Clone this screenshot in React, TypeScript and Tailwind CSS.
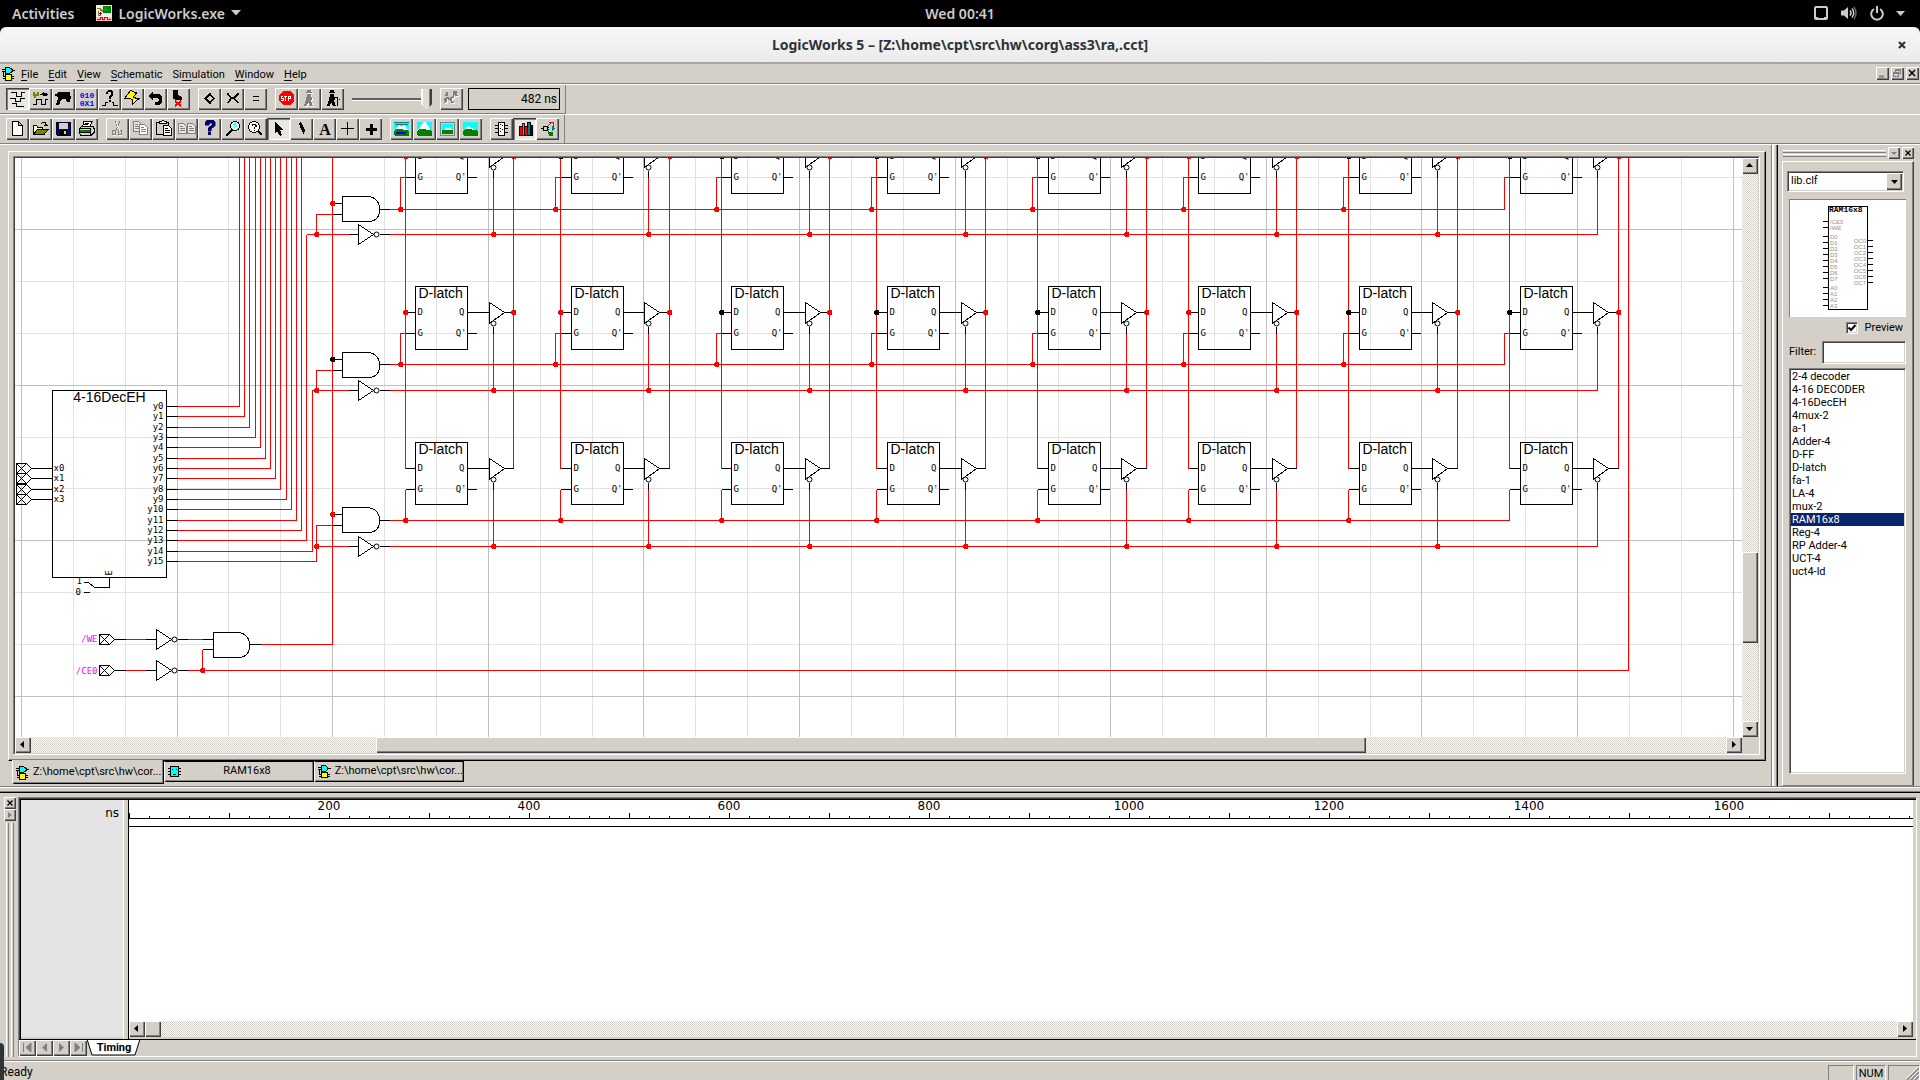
import React, { useState } from "react";

const RAISED = "bg-[#d4d0c8] shadow-[inset_1px_1px_0_#fff,inset_-1px_-1px_0_#404040,inset_-2px_-2px_0_#808080]";
const PRESSED = "bg-[#e9e7e3] shadow-[inset_1px_1px_0_#404040,inset_2px_2px_0_#808080,inset_-1px_-1px_0_#fff]";
const SUNKEN = "border border-l-[#808080] border-t-[#808080] border-r-white border-b-white shadow-[inset_1px_1px_0_#404040,inset_-1px_-1px_0_#d4d0c8]";
const DITHER = "bg-[conic-gradient(#fff_25%,#d4d0c8_0_50%,#fff_0_75%,#d4d0c8_0)] bg-[length:2px_2px]";

/* ---------- toolbar icons ---------- */

const P = ({ d, s = "#000", f = "none", w = 1 }: { d: string; s?: string; f?: string; w?: number }) => (
  <path d={d} stroke={s} fill={f} strokeWidth={w} />
);

function Icon({ children, size = 18 }: { children: React.ReactNode; size?: number }) {
  return (
    <svg width={size} height={size} viewBox="1 1 18 18" shapeRendering="crispEdges" className="overflow-visible" aria-hidden="true">
      {children}
    </svg>
  );
}

const page = (x: number, y: number, c: string, f = "#fff") => (
  <>
    <path d={`M${x}.5 ${y}.5h5l3 3v7h-8z`} stroke={c} fill={f} />
    <path d={`M${x + 2} ${y + 3}.5h3M${x + 2} ${y + 5}.5h5M${x + 2} ${y + 7}.5h5`} stroke={c} />
  </>
);

const walker = (c: string) => (
  <>
    <rect x="7" y="1" width="4" height="3" fill={c} />
    <rect x="6" y="3" width="6" height="1" fill={c} />
    <path d="M7 5h4l1 5-1 2 2 5h-3l-2-4-1 4H4l2-6z" fill={c} />
  </>
);

const landscape = (mountain: string, extra?: React.ReactNode) => (
  <>
    <rect x="2" y="3" width="15" height="9" fill="#0ff" />
    <path d={mountain} fill="#fff" />
    <path d="M2 12l2-2h5l3 1h3l2 2v3l-1 1H3l-1-1z" fill="#008000" />
    {extra}
  </>
);

const icons: Record<string, React.ReactNode> = {
  wave: <P d="M3 3.500h5.500v4H13v-4h4M2 9.500h5.500v3H12v-3h5M4 14.500h4.500v3H16" />,
  probe: (
    <>
      <P d="M2 15.500h3V10.500h5v5h4v-5h3" />
      <path d="M2 3h2v2h2V3h2v4H5v2H3V7H2z" fill="#808000" />
      <P d="M9 5.500h3M15 5.500h2" />
      <path d="M11 5l2-3v2h3v3h-3v1z" fill="#000" />
    </>
  ),
  gun: <path d="M1 5h2l1-2h12v3h-1l2 2-1 5h-3l-1-3H9l-2 1-2 5H2l2-7-1-2H1z" fill="#000" />,
  binary: (
    <g fill="#00f" stroke="none" fontSize="8" fontWeight="bold" className="font-['Liberation_Mono']">
      <text x="10" y="9" textAnchor="middle">010</text>
      <text x="10" y="17" textAnchor="middle">0X1</text>
    </g>
  ),
  query: (
    <>
      <path d="M6 5V3l2-2h3l2 2v3l-2 2v2H9V7l2-2V3H8v2zM9 11h2v2H9z" fill="#000" />
      <P d="M2 16.500h3.500v-3H8M12 13.500h1.500v3h4" />
    </>
  ),
  bolt: <path d="M7.500 1.500L1.500 9.500h6l1.500 1v5l7.500-6.500h-4l-2-1 3-4z" fill="#ff0" stroke="#000" />,
  undo: <path d="M2 7l5-5v3h6l3 3v5l-3 3H9v-3h3l1-2-1-2H7v3z" fill="#000" />,
  boot: (
    <>
      <path d="M4 1h5v5l4 2v3H8l-4-1z" fill="#000" />
      <P d="M6 12l6 5M12 12l-6 5" s="#f00" w={2} />
    </>
  ),
  diamond: <path d="M10 5L14 9.500 10 14 5.500 9.500z" stroke="#000" fill="none" strokeWidth="1.500" />,
  cross: <P d="M4.500 4.500l3.500 4h3.500l4-4M4.500 14.500l3.500-5h3.500l4 5" w={1.500} />,
  equals: <P d="M7 7.500h6M7 11.500h6" />,
  stop: (
    <>
      <path d="M6 2h7l4 4v6l-4 4H6l-4-4V6z" fill="#f00" />
      <P d="M6 7.500H4.500v2H6v2H4M7 7.500h3M8.500 7v5M11.500 7v5M11.500 7.500h2v2h-2" s="#fff" />
    </>
  ),
  stepGray: (
    <>
      <g transform="translate(1 1)">{walker("#fff")}</g>
      {walker("#808080")}
    </>
  ),
  walk: (
    <>
      {walker("#000")}
      <P d="M12 8.500h2.500v8M16 10.500h1" />
    </>
  ),
  runGray: (
    <>
      <P d="M3 12l3-2 3 1 4-3M9 11l3 4M6 10l-2 5M14 5l2 3" s="#fff" w={2} />
      <P d="M2 11l3-2 3 1 4-3M8 10l3 4M5 9l-2 5M13 4l2 3M3 6h3M4 4h2" s="#808080" w={2} />
      <rect x="11" y="2" width="4" height="4" fill="#808080" />
    </>
  ),
  fileNew: <path d="M4.500 2.500h6l4 4v9.500h-10z M10.500 2.500v4h4" fill="#fff" stroke="#000" />,
  fileOpen: (
    <>
      <path d="M2.500 15.500v-9h3l1 1.500h5v2.500" fill="#ffffb0" stroke="#000" />
      <path d="M2.500 15.500l4-5.500h11l-4.500 5.500z" fill="#808000" stroke="#000" />
      <P d="M10 4.500l2-1h2l1.500 3M13 6.500h4" />
    </>
  ),
  save: (
    <>
      <path d="M2.500 3.500h13.500v13h-12.500l-1-1z" fill="#000080" stroke="#000" />
      <rect x="5" y="4" width="9" height="6" fill="#d4d0c8" />
      <rect x="5" y="11" width="8" height="5" fill="#000" />
      <rect x="10" y="12" width="2" height="3" fill="#d4d0c8" />
    </>
  ),
  print: (
    <>
      <path d="M5.500 7.500l1.500-5h8l-2 5z" fill="#fff" stroke="#000" />
      <path d="M2.500 9.500l2-2h12l.5 2v4l-3 3h-10l-1.500-2z" fill="#d4d0c8" stroke="#000" />
      <path d="M3 11h10v2H3z" fill="#008000" />
      <P d="M3 9.500h10M3 13.500h10M8 4.500h4M7 5.500h4M13.500 9v7" />
    </>
  ),
  cut: (
    <>
      <P d="M7 2l4 9M12 2l-4 9" s="#808080" />
      <P d="M4.500 11.500h3v4h-3zM10.500 11.500h3v4h-3z" s="#808080" />
      <P d="M8 3l4 9M5 16.500h3M11 16.500h3" s="#fff" />
    </>
  ),
  copy: (
    <>
      {page(2, 2, "#808080", "#e8e6e2")}
      {page(8, 5, "#808080", "#fff")}
    </>
  ),
  paste: (
    <>
      <path d="M2.500 3.500h12v12h-12z" fill="#d4d0c8" stroke="#000" />
      <path d="M5.500 4.500v-2h2l1-1h1l1 1h2v2z" fill="#fff" stroke="#000" />
      {page(9, 6, "#000")}
    </>
  ),
  dup: (
    <>
      {page(1, 4, "#808080", "#e8e6e2")}
      {page(10, 4, "#808080", "#e8e6e2")}
    </>
  ),
  help: (
    <>
      <path d="M5 6V3l2-2h6l2 2v4l-4 3v2H8V9l4-3V4H9v2z" fill="#000080" stroke="#000" strokeWidth=".5" />
      <rect x="8" y="13" width="3" height="3" fill="#000080" />
    </>
  ),
  zoomIn: (
    <>
      <circle cx="12" cy="7" r="4.500" fill="#c0ffff" stroke="#000" />
      <P d="M10 6l3-2M11 9l3-3" s="#0ff" />
      <P d="M9 11l-6 6" w={2} />
    </>
  ),
  zoomQ: (
    <>
      <circle cx="8" cy="8" r="5.500" fill="#fff" stroke="#000" />
      <P d="M6 6.500l1-1h2l1 1v1l-2 1v1M8 11h1" />
      <P d="M12 12l4 4" w={2} />
    </>
  ),
  arrow: <path d="M6 3l9 8h-4l2 5-2 1-3-5-2 2z" fill="#000" />,
  pen: <path d="M7 4l2-1 4 8-1 5-3-6z" fill="#000" />,
  textA: (
    <text x="10" y="16" textAnchor="middle" fontSize="16" fontWeight="bold" className="font-['Liberation_Serif']">
      A
    </text>
  ),
  thin: <P d="M9.500 3v13M3 9.500h13" />,
  thick: <P d="M10.500 5v11M5 10.500h11" w={3} />,
  land1: landscape(
    "M3 10l4-4 2 2 3-3 4 6z",
    <>
      <P d="M2 3.500h15M3 5.500h13" s="#008080" />
      <ellipse cx="9" cy="14" rx="5" ry="1.500" fill="#00f" />
    </>,
  ),
  land2: landscape("M2 12l3-4 3-5h3l3 5 2 4z"),
  land3: (
    <>
      <rect x="2" y="3" width="15" height="14" fill="#808080" />
      <rect x="3" y="4" width="13" height="12" fill="#d4d0c8" />
      <rect x="4" y="5" width="11" height="6" fill="#0ff" />
      <path d="M5 11l3-3 2 1 2-1 2 3z" fill="#fff" />
      <rect x="4" y="11" width="11" height="4" fill="#008000" />
    </>
  ),
  land4: landscape("M3 10l4-3 4 2 3 2z"),
  chip: (
    <>
      <path d="M6.500 3.500h6v13h-6z" fill="#fff" stroke="#000" />
      <P d="M3 6.500h3M3 9.500h3M3 13.500h3M13 6.500h3M13 9.500h3M13 13.500h3M8 5.500h1M8 9.500h1M8 12.500h1M10 6.500h1M10 10.500h1" />
    </>
  ),
  books: (
    <>
      <rect x="4.500" y="7.500" width="3" height="9" fill="#f00" stroke="#000" />
      <rect x="7.500" y="4.500" width="2" height="12" fill="#ff8000" stroke="#800000" />
      <rect x="9.500" y="7.500" width="3" height="9" fill="#f00" stroke="#000" />
      <rect x="12.500" y="3.500" width="3" height="13" fill="#008080" stroke="#000" />
      <rect x="15.500" y="6.500" width="2" height="10" fill="#0000c0" stroke="#000" />
    </>
  ),
  net: (
    <>
      <P d="M3 9.500h2M6 7.500h3v4H5.500v-4zM9 8.500h2M9 10.500h2" />
      <P d="M10 7l3-3M11 3.500h4v4" s="#f00" />
      <path d="M14 7l3 2-3 3z" fill="#008080" />
      <path d="M10 12l2 1 3 0v4h-4z" fill="#008000" />
    </>
  ),
};

function ToolButton({ name, label, pressed = false }: { name: string; label: string; pressed?: boolean }) {
  return (
    <button
      type="button"
      aria-label={label}
      aria-pressed={pressed}
      className={`flex h-[22px] w-[23px] items-center justify-center ${pressed ? PRESSED : RAISED}`}
    >
      <Icon>{icons[name]}</Icon>
    </button>
  );
}

function ToolGroup({ items }: { items: [string, string, boolean?][] }) {
  return (
    <div className="flex">
      {items.map(([n, l, p]) => (
        <ToolButton key={n} name={n} label={l} pressed={p} />
      ))}
    </div>
  );
}

function GateIcon() {
  return (
    <svg width="13" height="14" viewBox="0 0 13 14" shapeRendering="crispEdges" aria-hidden="true">
      <path d="M0 2.500h4M0 4.500h4M10 3.500h3M1.500 5v5M1 9.500h3M1 11.500h3M9 9.500h3M9 11.500h3" stroke="#000" />
      <path d="M3.500.5h4l2.500 2v2l-2.500 2h-4z" fill="#0ff" stroke="#000" />
      <path d="M3.500 7.500h6v5.500h-6z" fill="#ff0" stroke="#000" />
    </svg>
  );
}

function ChipIcon() {
  return (
    <svg width="13" height="12" viewBox="0 0 13 12" shapeRendering="crispEdges" aria-hidden="true">
      <path d="M0 2.500h13M0 5.500h13M0 8.500h13" stroke="#000" />
      <rect x="2.500" y=".5" width="8" height="10" fill="#0ff" stroke="#000" />
      <path d="M4 3.500h1M8 3.500h1M5 8.500h3" stroke="#000" />
    </svg>
  );
}

/* ---------- top of the window ---------- */

function TopBar() {
  return (
    <header className="grid h-[27px] shrink-0 grid-cols-[1fr_auto_1fr] items-center bg-black pb-px font-['Noto_Sans',sans-serif] text-[14px] font-semibold text-[#ccc]">
      <div className="flex items-center">
        <button type="button" className="pl-3">Activities</button>
        <button type="button" className="flex items-center pl-[22px]">
          <svg width="16" height="16" viewBox="0 0 16 16" shapeRendering="crispEdges" className="mr-[6px]" aria-hidden="true">
            <rect width="16" height="16" fill="#eee" />
            <rect x="7" y="1" width="8" height="7" fill="#008000" />
            <rect x="8" y="2" width="4" height="4" fill="#00a000" />
            <path d="M1 3h3v3M2 6v4h3M5 4l2 3" stroke="#808000" fill="none" />
            <path d="M3 8h3M4 7v3" stroke="#800080" />
            <rect y="12" width="16" height="4" fill="#ffc0c0" />
            <path d="M1 14.500h3v-2h2v2h2v-2h3v2h4" stroke="#f00" fill="none" />
          </svg>
          LogicWorks.exe
          <svg width="10" height="6" viewBox="0 0 10 6" className="ml-[6px]" aria-hidden="true"><path d="M0 0h10L5 5.500z" fill="#ccc" /></svg>
        </button>
      </div>
      <time>Wed 00:41</time>
      <div className="flex items-center justify-end pr-[15px]">
        <svg width="14" height="14" viewBox="0 0 14 14" aria-hidden="true"><rect x="1" y="1" width="12" height="12" rx="1" fill="none" stroke="#ccc" strokeWidth="2" /><path d="M2 11h2v1h-2zM10 11h2v1h-2z" fill="#ccc" /></svg>
        <svg width="16" height="14" viewBox="0 0 16 14" className="ml-[13px]" aria-hidden="true">
          <path d="M0 4.500h3L7 1v12L3 9.500H0z" fill="#ccc" />
          <path d="M9 4.500q2 2.500 0 5M11 2.500q3.500 4.500 0 9" stroke="#ccc" strokeWidth="1.500" fill="none" />
          <path d="M13 1q4 6 0 12" stroke="#666" strokeWidth="1.500" fill="none" />
        </svg>
        <svg width="14" height="15" viewBox="0 0 14 15" className="ml-[13px]" aria-hidden="true">
          <path d="M4 3a5.800 5.800 0 1 0 6 0M7 0v7" stroke="#ccc" strokeWidth="2" fill="none" />
        </svg>
        <svg width="9" height="5" viewBox="0 0 9 5" className="ml-3" aria-hidden="true"><path d="M0 0h9L4.500 5z" fill="#ccc" /></svg>
      </div>
    </header>
  );
}

function TitleBar() {
  return (
    <div className="bg-black">
      <div className="grid h-[37px] grid-cols-[1fr_auto_1fr] items-center rounded-t-md border-b-2 border-[#a6a6a6] bg-gradient-to-b from-[#f7f7f7] to-[#ebebeb] font-['Noto_Sans',sans-serif]">
        <span />
        <h1 className="text-[14px] font-bold text-[#2e3436]">LogicWorks 5 – [Z:\home\cpt\src\hw\corg\ass3\ra,.cct]</h1>
        <button type="button" aria-label="Close" className="mr-[14px] justify-self-end">
          <svg width="8" height="8" viewBox="0 0 8 8" aria-hidden="true"><path d="M1 1l6 6M7 1l-6 6" stroke="#2e3436" strokeWidth="2.200" /></svg>
        </button>
      </div>
    </div>
  );
}

const menus: [string, string, string][] = [
  ["", "F", "ile"], ["", "E", "dit"], ["", "V", "iew"], ["", "S", "chematic"], ["Si", "m", "ulation"], ["", "W", "indow"], ["", "H", "elp"],
];

function MenuBar() {
  return (
    <nav className="flex h-5 items-center border-b border-[#808080] pl-[2px] text-[11px]">
      <GateIcon />
      <div className="flex gap-[10px] pt-[3px] pl-[6px]">
        {menus.map(([a, u, b]) => (
          <button type="button" key={u}>
            {a}
            <span className="underline underline-offset-2">{u}</span>
            {b}
          </button>
        ))}
      </div>
      <div className="ml-auto flex gap-[2px] pr-px">
        <button type="button" aria-label="Minimize" className={`size-[13px] ${RAISED}`}>
          <svg width="13" height="13" aria-hidden="true"><path d="M3 9.500h5" stroke="#808080" strokeWidth="2" /></svg>
        </button>
        <button type="button" aria-label="Restore" className={`size-[13px] ${RAISED}`}>
          <svg width="13" height="13" shapeRendering="crispEdges" aria-hidden="true"><path d="M4.500 5V2.500h5v4H8M4 3.500h6M2.500 5.500h5v4h-5zM2 6.500h6" stroke="#808080" fill="none" /></svg>
        </button>
        <button type="button" aria-label="Close document" className={`size-[13px] ${RAISED}`}>
          <svg width="13" height="13" aria-hidden="true"><path d="M3 3l6 6M9 3l-6 6" stroke="#000" strokeWidth="1.500" /></svg>
        </button>
      </div>
    </nav>
  );
}

function Toolbars() {
  return (
    <div className="border-b border-[#808080]">
      <div className="border-t border-white">
        <div className="flex w-fit items-center gap-2 border-r border-b border-[#808080] py-[3px] pr-[5px] pl-[6px]">
          <ToolGroup
            items={[
              ["wave", "Timing window", true], ["probe", "Probe"], ["gun", "Trigger"], ["binary", "Show values"],
              ["query", "Signal query"], ["bolt", "Reset"], ["undo", "Clear unknowns"], ["boot", "Kick"],
            ]}
          />
          <ToolGroup items={[["diamond", "Expand"], ["cross", "Compress"], ["equals", "Normal scale"]]} />
          <div className="flex items-center gap-2">
            <ToolGroup items={[["stop", "Stop"], ["stepGray", "Step"], ["walk", "Walk"]]} />
            <div className="grid w-20 items-center">
              <input
                type="range"
                aria-label="Simulation speed"
                defaultValue={100}
                className="h-[22px] w-full appearance-none bg-transparent [&::-webkit-slider-runnable-track]:h-[3px] [&::-webkit-slider-runnable-track]:border-t-2 [&::-webkit-slider-runnable-track]:border-b [&::-webkit-slider-runnable-track]:border-t-[#606060] [&::-webkit-slider-runnable-track]:border-b-white [&::-webkit-slider-thumb]:-mt-[11px] [&::-webkit-slider-thumb]:h-[21px] [&::-webkit-slider-thumb]:w-[11px] [&::-webkit-slider-thumb]:appearance-none [&::-webkit-slider-thumb]:bg-[linear-gradient(90deg,#fff_2px,#e0ddd6_2px_8px,#808080_8px_9px,#404040_9px)] [&::-webkit-slider-thumb]:[clip-path:polygon(0_0,100%_0,100%_75%,50%_100%,0_75%)]"
              />
            </div>
            <ToolButton name="runGray" label="Run" />
          </div>
          <output className="-ml-[3px] flex h-[22px] w-[92px] items-center justify-end border border-black pr-[2px] text-[12px]">482 ns</output>
        </div>
      </div>
      <div className="border-t border-white">
        <div className="flex w-fit gap-2 border-r border-[#808080] py-[3px] pr-[5px] pl-[6px]">
          <ToolGroup items={[["fileNew", "New"], ["fileOpen", "Open"], ["save", "Save"], ["print", "Print"]]} />
          <ToolGroup
            items={[
              ["cut", "Cut"], ["copy", "Copy"], ["paste", "Paste"], ["dup", "Duplicate"], ["help", "Help"], ["zoomIn", "Magnify"],
              ["zoomQ", "Find"], ["arrow", "Point", true], ["pen", "Zap"], ["textA", "Text"], ["thin", "Draw signal"], ["thick", "Draw bus"],
            ]}
          />
          <ToolGroup items={[["land1", "Zoom out"], ["land2", "Zoom in"], ["land3", "Fit to window"], ["land4", "Normal size"]]} />
          <ToolGroup items={[["chip", "New device"], ["books", "Parts palette", true], ["net", "Connections"]]} />
        </div>
      </div>
    </div>
  );
}

/* ---------- scroll bars ---------- */

const arrows: Record<string, string> = {
  up: "M4 9h7L7.500 5z",
  down: "M4 6h7L7.500 10z",
  left: "M9 4v7L5 7.500z",
  right: "M6 4v7l4-3.500z",
};

function ScrollButton({ dir }: { dir: string }) {
  return (
    <button type="button" aria-label={`Scroll ${dir}`} className={`size-4 shrink-0 ${RAISED}`}>
      <svg width="16" height="16" aria-hidden="true"><path d={arrows[dir]} fill="#000" /></svg>
    </button>
  );
}

/* ---------- schematic ---------- */

const RED = "#f00";
const latches = [
  { x: 415, din: 405, gate: 400, tri: 489, en: 493, black: false },
  { x: 571, din: 560, gate: 555, tri: 644, en: 648, black: false },
  { x: 731, din: 721, gate: 716, tri: 805, en: 809, black: true },
  { x: 887, din: 876, gate: 871, tri: 961, en: 965, black: true },
  { x: 1048, din: 1037, gate: 1032, tri: 1121, en: 1126, black: true },
  { x: 1198, din: 1188, gate: 1183, tri: 1272, en: 1276, black: false },
  { x: 1359, din: 1348, gate: 1343, tri: 1432, en: 1437, black: true },
  { x: 1520, din: 1509, gate: 1504, tri: 1593, en: 1597, black: true },
];
const rows = [
  { d: 156, g: 177, top: 130, bottom: 193, bus: 209, low: 234, gate: 196, last: false },
  { d: 312, g: 333, top: 286, bottom: 349, bus: 364, low: 390, gate: 352, last: false },
  { d: 468, g: 489, top: 442, bottom: 504, bus: 520, low: 546, gate: 507, last: true },
];

const Dot = ({ x, y, c = RED }: { x: number; y: number; c?: string }) => (
  <path d={`M${x - 1.5} ${y - 2.5}h3l1 1v3l-1 1h-3l-1-1v-3z`} fill={c} />
);

const Tri = ({ x, y }: { x: number; y: number }) => (
  <>
    <path d={`M${x} ${y - 10}v20l15 -10z`} stroke="#000" fill="#fff" />
    <circle cx={x + 18} cy={y} r="2.500" stroke="#000" fill="#fff" shapeRendering="auto" />
  </>
);

const AndGate = ({ x, y, w }: { x: number; y: number; w: number }) => (
  <path d={`M${x} ${y}h${w - 12}q12 1 12 13q0 12 -12 12h${12 - w}z`} stroke="#000" fill="#fff" />
);

const Port = ({ x, y, tip = 5 }: { x: number; y: number; tip?: number }) => (
  <path
    d={`M${x} ${y - 5}h10l${tip} 5l${-tip} 5h-10zM${x} ${y - 5}l10 10M${x + 10} ${y - 5}l-10 10`}
    stroke="#000"
    fill="none"
  />
);

function Latch({ l, r, i }: { l: (typeof latches)[number]; r: (typeof rows)[number]; i: number }) {
  const { x, din, tri, en } = l;
  const gx = r.last ? din : l.gate;
  const end = i === latches.length - 1;
  return (
    <g>
      <path d={`M${din} ${r.g}H${gx}V${r.bus}M${en} ${r.g}V${r.low}`} stroke={RED} fill="none" />
      <path d={`M${din} ${r.d}H${x}M${din} ${r.g}H${x}M${x + 52} ${r.d}H${tri}M${x + 52} ${r.g}h9M${tri + 15} ${r.d}H${x + 98}M${en} ${r.d + 14}v7`} stroke="#000" />
      <rect x={x} y={r.top} width="52" height={r.bottom - r.top} fill="none" stroke="#000" />
      <path d={`M${tri} ${r.d - 10}v21l15 -11z`} stroke="#000" fill="none" />
      <circle cx={en} cy={r.d + 11} r="2.500" stroke="#000" fill="#fff" shapeRendering="auto" />
      {!end && <Dot x={gx} y={r.bus} />}
      {!end && <Dot x={en} y={r.low} />}
      {!r.last && <Dot x={din} y={r.d} c={l.black || (r.d < 200 && i === 1) ? "#000" : RED} />}
      {!r.last && <Dot x={x + 98} y={r.d} />}
      {r.top > 158 && (
        <text x={x + 3} y={r.top + 11} className="font-['Liberation_Sans',sans-serif] text-[14px]">D-latch</text>
      )}
      <g className="font-['DejaVu_Sans_Mono',monospace] text-[9px]">
        <text x={x + 2} y={r.d + 2}>D</text>
        <text x={x + 49} y={r.d + 2} textAnchor="end">Q</text>
        <text x={x + 2} y={r.g + 2}>G</text>
        <text x={x + 51} y={r.g + 2} textAnchor="end">Q'</text>
      </g>
    </g>
  );
}

function Schematic() {
  const lines = Array.from({ length: 40 }, (_, k) => k);
  return (
    <svg className="block h-full w-full bg-white" shapeRendering="crispEdges" role="img" aria-label="RAM circuit schematic">
      <g transform="translate(-14.5 -157.5)">
        {[false, true].map((major) => (
          <g key={String(major)} stroke={major ? "#c0c0c0" : "#e2e2e2"}>
            {lines.filter((k) => (k % 3 === 0) === major).map((k) => (
              <path key={k} d={`M${Math.round(21 + 51.870 * k)} 0V2000`} />
            ))}
            {lines.filter((k) => (k % 3 === 1) === major).map((k) => (
              <path key={k} d={`M0 ${Math.round(177 + 51.900 * k)}H3000`} />
            ))}
          </g>
        ))}

        <g stroke={RED} fill="none">
          {Array.from({ length: 16 }, (_, k) => {
            const x = k === 15 ? 316 : Math.round(239 + 5.187 * k);
            const y = Math.round(406 + 10.340 * k);
            const end = k === 15 ? 525 : k === 14 ? 390 : k === 13 ? 234 : 100;
            return <path key={k} d={`M177 ${y}H${x}V${end}`} />;
          })}
          <path d="M260 644H332V100M187 670H1628V100M125 639h20M125 670h20M187 639h15M202 670V649" />
          <path d="M306 234H348M311 390H348M316 546H348" />
          {rows.map((r) => (
            <path key={r.d} d={`M389 ${r.bus}H${r.last ? 1509 : 1504}M389 ${r.low}H1597M332 ${r.gate + 18}H316V${r.low}`} />
          ))}
          {latches.map(({ x, din }) => (
            <path key={x} d={`M${din} 100V468M${x + 98} 100V468`} />
          ))}
        </g>

        {rows.map((r, i) => (
          <g key={r.d}>
            <path d={`M332 ${r.gate + 7}H342M332 ${r.gate + 18}H342M379 ${r.bus}h10M348 ${r.low}h10M379 ${r.low}h10`} stroke="#000" />
            <AndGate x={342} y={r.gate} w={37} />
            <Tri x={358} y={r.low} />
            <Dot x={332} y={r.gate + 7} c={i === 1 ? "#000" : RED} />
            <Dot x={316} y={r.low} />
            {latches.map((l, c) => (
              <Latch key={l.x} l={l} r={r} i={c} />
            ))}
          </g>
        ))}

        <path d="M52 390H166V577H52z" stroke="#000" fill="none" />
        <text x="109" y="401" textAnchor="middle" className="font-['Liberation_Sans',sans-serif] text-[14px]">4-16DecEH</text>
        <g className="font-['DejaVu_Sans_Mono',monospace] text-[9px]">
          {Array.from({ length: 16 }, (_, k) => {
            const y = Math.round(406 + 10.340 * k);
            return (
              <g key={k}>
                <path d={`M166 ${y}h11`} stroke="#000" />
                <text x="163" y={y + 2} textAnchor="end">{`y${k}`}</text>
              </g>
            );
          })}
          {[468, 478, 489, 499].map((y, k) => (
            <g key={y}>
              <Port x={16} y={y} />
              <path d={`M31 ${y}H52`} stroke="#000" />
              <text x="53" y={y + 2}>{`x${k}`}</text>
            </g>
          ))}
          <text transform="translate(111 575) rotate(-90)">E</text>
          <text x="76" y="583">1</text>
          <text x="75" y="594">0</text>
          <path d="M109 577V587H94L88 582H83M83 592h6" stroke="#000" fill="none" />
          <text x="97" y="641" textAnchor="end" fill="#f0f">/WE</text>
          <text x="97" y="673" textAnchor="end" fill="#f0f">/CE0</text>
        </g>
        {[639, 670].map((y) => (
          <g key={y}>
            <Port x={99} y={y} />
            <path d={`M114 ${y}h11M145 ${y}h11M177 ${y}h10`} stroke="#000" />
            <Tri x={156} y={y} />
          </g>
        ))}
        <path d="M202 639h11M202 649h11M249 644h11" stroke="#000" />
        <AndGate x={213} y={632} w={36} />
        <Dot x={202} y={670} />
      </g>
    </svg>
  );
}

function DocTab({ icon, children, active = false, center = false }: { icon: React.ReactNode; children: React.ReactNode; active?: boolean; center?: boolean }) {
  return (
    <button
      type="button"
      role="tab"
      aria-selected={active}
      className={`flex items-center gap-1 rounded-bl-[3px] border-r border-b border-l border-r-black border-b-black border-l-white pl-[3px] text-[11px] shadow-[inset_-1px_-1px_0_#808080] ${active ? "-mt-px h-6 w-[152px] bg-[#d4d0c8] pt-[2px]" : "h-[21px] w-[150px] border-t border-t-black"}`}
    >
      {icon}
      <span className={center ? "flex-1 pr-1 text-center" : ""}>{children}</span>
    </button>
  );
}

function Workspace() {
  return (
    <section className="flex min-w-0 flex-1 flex-col pt-[6px] pr-[5px] pl-2">
      <div className="flex min-h-0 flex-1 border-t border-r border-b border-l border-t-white border-r-black border-b-black border-l-white p-1 shadow-[inset_-1px_-1px_0_#808080] pr-[5px] pb-[5px]">
        <div className="flex min-w-0 flex-1 flex-col border border-t-[#808080] border-r-white border-b-white border-l-[#808080]">
          <div className="flex min-h-0 flex-1 flex-col border border-t-[#404040] border-r-[#d4d0c8] border-b-[#d4d0c8] border-l-[#404040]">
            <div className="flex min-h-0 flex-1">
              <div className="min-w-0 flex-1 overflow-hidden">
                <Schematic />
              </div>
              <div className={`flex w-4 shrink-0 flex-col ${DITHER}`}>
                <ScrollButton dir="up" />
                <span className="grow-[379] basis-0" />
                <span className={`grow-[91] basis-0 ${RAISED}`} />
                <span className="grow-[78] basis-0" />
                <ScrollButton dir="down" />
              </div>
            </div>
            <div className="flex h-4 shrink-0">
              <div className={`flex flex-1 ${DITHER}`}>
                <ScrollButton dir="left" />
                <span className="grow-[345] basis-0" />
                <span className={`grow-[991] basis-0 ${RAISED}`} />
                <span className="grow-[360] basis-0" />
                <ScrollButton dir="right" />
              </div>
              <span className="w-4 bg-[#d4d0c8]" />
            </div>
          </div>
        </div>
      </div>
      <div role="tablist" className="flex h-[25px] shrink-0 items-start pl-1">
        <DocTab active icon={<GateIcon />}>Z:\home\cpt\src\hw\cor...</DocTab>
        <DocTab center icon={<ChipIcon />}>RAM16x8</DocTab>
        <DocTab icon={<GateIcon />}>Z:\home\cpt\src\hw\cor...</DocTab>
      </div>
    </section>
  );
}

/* ---------- parts palette ---------- */

const parts = ["2-4 decoder", "4-16 DECODER", "4-16DecEH", "4mux-2", "a-1", "Adder-4", "D-FF", "D-latch", "fa-1", "LA-4", "mux-2", "RAM16x8", "Reg-4", "RP Adder-4", "UCT-4", "uct4-ld"];

const leftPins: [string, number][] = [
  ["/CE0", 22], ["/WE", 28], ["D0", 37], ["D1", 43], ["D2", 49], ["D3", 55], ["D4", 61], ["D5", 67], ["D6", 73], ["D7", 79],
  ["A0", 88], ["A1", 94], ["A2", 100], ["A3", 106],
];

function PartPreview() {
  return (
    <svg width="116" height="117" className="block" role="img" aria-label="RAM16x8 symbol">
      <g shapeRendering="crispEdges" stroke="#000" fill="none">
        <path d="M38.500 6.500h39v103h-39z" />
        {leftPins.map(([n, y]) => (
          <path key={n} d={`M33 ${y - 1}.5h5`} />
        ))}
        {Array.from({ length: 8 }, (_, k) => (
          <path key={k} d={`M78 ${40 + 6 * k}.5h5`} />
        ))}
      </g>
      <text x="39" y="12" className="font-['Liberation_Mono',monospace] text-[8px] font-bold">RAM16x8</text>
      <g fill="#909090" className="font-['Liberation_Sans',sans-serif] text-[6px]">
        {leftPins.map(([n, y]) => (
          <text key={n} x="40" y={y + 2}>{n}</text>
        ))}
        {Array.from({ length: 8 }, (_, k) => (
          <text key={k} x="76" y={43 + 6 * k} textAnchor="end">{`OC${k}`}</text>
        ))}
      </g>
    </svg>
  );
}

function PartsPalette() {
  const [selected, setSelected] = useState("RAM16x8");
  return (
    <aside className="flex w-[142px] shrink-0 flex-col pt-px pr-[6px] pl-1 text-[11px]">
      <div className="flex h-[15px] shrink-0 items-center gap-[2px] pb-px pl-px">
        <span className="flex-1 border-y border-t-white border-b-[#808080] py-px"><span className="block h-[3px] border-y border-t-[#808080] border-b-white" /></span>
        <button type="button" aria-label="Dock menu" className={`flex size-3 items-center justify-center ${RAISED}`}>
          <svg width="6" height="3" aria-hidden="true"><path d="M0 0h6L3 3z" fill="#808080" /></svg>
        </button>
        <button type="button" aria-label="Close palette" className={`flex size-3 items-center justify-center ${RAISED}`}>
          <svg width="7" height="7" aria-hidden="true"><path d="M.5.5l5 5M5.500.5l-5 5" stroke="#000" strokeWidth="1.300" /></svg>
        </button>
      </div>
      <div className="flex min-h-0 flex-1 flex-col border border-t-white border-r-[#404040] border-b-[#808080] border-l-white pt-[9px] pr-[7px] pb-[11px] pl-1 shadow-[inset_-1px_0_0_#808080]">
        <div className={`mr-[2px] flex h-[21px] shrink-0 bg-white p-px ${SUNKEN}`}>
          <select aria-label="Library" className="h-full min-w-0 flex-1 appearance-none bg-transparent pl-[2px] text-[11px]">
            <option>lib.clf</option>
          </select>
          <span className={`pointer-events-none flex w-4 items-center justify-center ${RAISED}`}>
            <svg width="7" height="4" aria-hidden="true"><path d="M0 0h7L3.500 4z" fill="#000" /></svg>
          </span>
        </div>
        <div className="mt-[7px] ml-[2px] shrink-0 border-t border-l border-[#808080] bg-white">
          <PartPreview />
        </div>
        <label className="mt-[5px] flex h-3 shrink-0 items-center justify-end gap-[7px] pr-[3px]">
          <input type="checkbox" defaultChecked className="peer sr-only" />
          <span className={`flex size-3 items-center justify-center bg-white ${SUNKEN}`}>
            <svg width="8" height="8" aria-hidden="true"><path d="M.5 3.500L3 6l4.500-5" stroke="#000" strokeWidth="2" fill="none" /></svg>
          </span>
          <span className="pt-px">Preview</span>
        </label>
        <label className="mt-[7px] flex h-[23px] shrink-0 items-center justify-between pl-[2px]">
          Filter:
          <input type="text" className={`h-full w-[84px] bg-white px-1 ${SUNKEN}`} />
        </label>
        <ul role="listbox" aria-label="Parts" className={`mt-1 ml-[2px] min-h-0 flex-1 overflow-hidden bg-white p-px ${SUNKEN}`}>
          {parts.map((p) => (
            <li key={p} role="option" aria-selected={p === selected}>
              <button
                type="button"
                onClick={() => setSelected(p)}
                className={`block h-[13px] w-full pl-px text-left text-[11px] leading-[13px] ${p === selected ? "bg-[#0a246a] text-white" : ""}`}
              >
                {p}
              </button>
            </li>
          ))}
        </ul>
      </div>
    </aside>
  );
}

/* ---------- timing ---------- */

function Ruler() {
  return (
    <svg className="block h-[27px] w-full" shapeRendering="crispEdges" role="img" aria-label="Time scale">
      <path d="M0 18.500H4000M0 26.500H4000" stroke="#000" />
      {Array.from({ length: 150 }, (_, k) => (
        <path key={k} d={`M${k * 20}.5 ${k % 5 === 0 ? 13 : 16}V18`} stroke="#000" />
      ))}
      {Array.from({ length: 8 }, (_, k) => (
        <text key={k} x={(k + 1) * 200} y="10" textAnchor="middle" className="font-['DejaVu_Sans',sans-serif] text-[12px]">
          {(k + 1) * 200}
        </text>
      ))}
    </svg>
  );
}

const navPaths = ["M4.500 4v9M12 4v9L7 8.500z", "M11 4v9L6 8.500z", "M6 4v9l5-4.500z", "M5 4v9l5-4.500zM12.500 4v9"];

function TimingDock() {
  return (
    <section className="flex h-[272px] shrink-0 flex-col">
      <div className="h-[5px] shrink-0 border-b border-black shadow-[inset_0_-1px_0_#808080]" />
      <div className="flex min-h-0 flex-1 pt-1 pr-[3px] pb-[3px]">
        <div className="flex w-[18px] shrink-0 flex-col items-center pl-[2px]">
          <button type="button" aria-label="Close timing" className={`flex size-3 items-center justify-center ${RAISED}`}>
            <svg width="7" height="7" aria-hidden="true"><path d="M.5.5l5 5M5.500.5l-5 5" stroke="#000" strokeWidth="1.300" /></svg>
          </button>
          <button type="button" aria-label="Collapse timing" className={`flex size-3 items-center justify-center ${RAISED}`}>
            <svg width="4" height="6" aria-hidden="true"><path d="M0 0v6l4-3z" fill="#808080" /></svg>
          </button>
          <span className="mt-[2px] flex flex-1 gap-[2px]">
            <span className="w-[3px] border-x border-l-white border-r-[#808080]" />
            <span className="w-[3px] border-x border-l-white border-r-[#808080]" />
          </span>
        </div>
        <div className="flex min-w-0 flex-1 flex-col border border-t-[#808080] border-r-white border-b-white border-l-[#808080]">
          <div className="flex min-h-0 flex-1 border-t border-l border-[#404040]">
            <div className="flex min-w-0 flex-1 border-t border-l border-black">
              <div className="mb-[2px] w-[102px] shrink-0 bg-[#e4e4e4] pt-[7px] pr-1 text-right font-['DejaVu_Sans',sans-serif] text-[12px] leading-[13px]">ns</div>
              <div className="w-[6px] shrink-0 border-l border-white border-r border-r-black" />
              <div className="mr-[3px] flex min-w-0 flex-1 flex-col bg-white">
                <Ruler />
                <div className="flex-1" />
                <div className={`flex h-4 shrink-0 ${DITHER}`}>
                  <ScrollButton dir="left" />
                  <span className={`w-4 ${RAISED}`} />
                  <span className="flex-1" />
                  <ScrollButton dir="right" />
                </div>
                <div className="h-[2px] shrink-0 bg-[#d4d0c8]" />
              </div>
            </div>
          </div>
          <div className="flex h-[17px] shrink-0 border-t border-black">
            {navPaths.map((d, i) => (
              <button key={i} type="button" aria-label={["First tab", "Previous tab", "Next tab", "Last tab"][i]} className={`h-4 w-[17px] ${RAISED}`}>
                <svg width="17" height="16" viewBox="0 1 17 16" aria-hidden="true"><path d={d} fill="#808080" stroke={i % 3 === 0 ? "#808080" : "none"} /></svg>
              </button>
            ))}
            <button type="button" role="tab" aria-selected="true" className="grid h-4 w-[54px] place-items-center text-[11px] font-bold">
              <svg width="54" height="16" className="col-start-1 row-start-1" aria-hidden="true">
                <path d="M0-1h53l-5 16H5z" fill="#fff" stroke="#000" />
              </svg>
              <span className="col-start-1 row-start-1">Timing</span>
            </button>
          </div>
        </div>
      </div>
    </section>
  );
}

function StatusBar() {
  const cell = "border-t border-l border-r border-t-[#808080] border-l-[#808080] border-r-white";
  return (
    <footer className="flex h-5 shrink-0 border-t border-[#808080] text-[12px]">
      <div className="flex flex-1 items-start border-t border-white pt-[3px]">
        <span className="leading-[15px]">Ready</span>
        <div className="ml-auto flex h-[15px] gap-[2px] text-[11px]">
          <span className={`w-[26px] ${cell}`} />
          <span className={`w-[30px] text-center leading-[15px] ${cell}`}>NUM</span>
          <span className={`flex w-[32px] items-end justify-end ${cell}`}>
            <svg width="13" height="13" aria-hidden="true">
              <path d="M1 13L13 1M5 13l8-8M9 13l4-4" stroke="#808080" strokeWidth="1.500" />
              <path d="M0 12L12 0M4 12l8-8M8 12l4-4" stroke="#fff" />
            </svg>
          </span>
        </div>
      </div>
    </footer>
  );
}

export default function App() {
  return (
    <div className="relative flex h-screen flex-col overflow-hidden bg-[#d4d0c8] font-['Roboto',sans-serif] text-black">
      <TopBar />
      <TitleBar />
      <MenuBar />
      <Toolbars />
      <main className="flex min-h-0 flex-1 border-t border-b border-t-white border-b-white">
        <div className="flex min-w-0 flex-1 border-b border-[#808080]">
          <Workspace />
          <div className="w-[7px] shrink-0 border-r border-l border-r-black border-l-[#808080] shadow-[inset_2px_0_0_#fff,inset_-1px_0_0_#808080]" />
          <PartsPalette />
        </div>
      </main>
      <TimingDock />
      <StatusBar />
      <div className="absolute bottom-0 left-0 h-[37px] w-1 rounded-tr-sm bg-[#2e3436]" />
    </div>
  );
}
